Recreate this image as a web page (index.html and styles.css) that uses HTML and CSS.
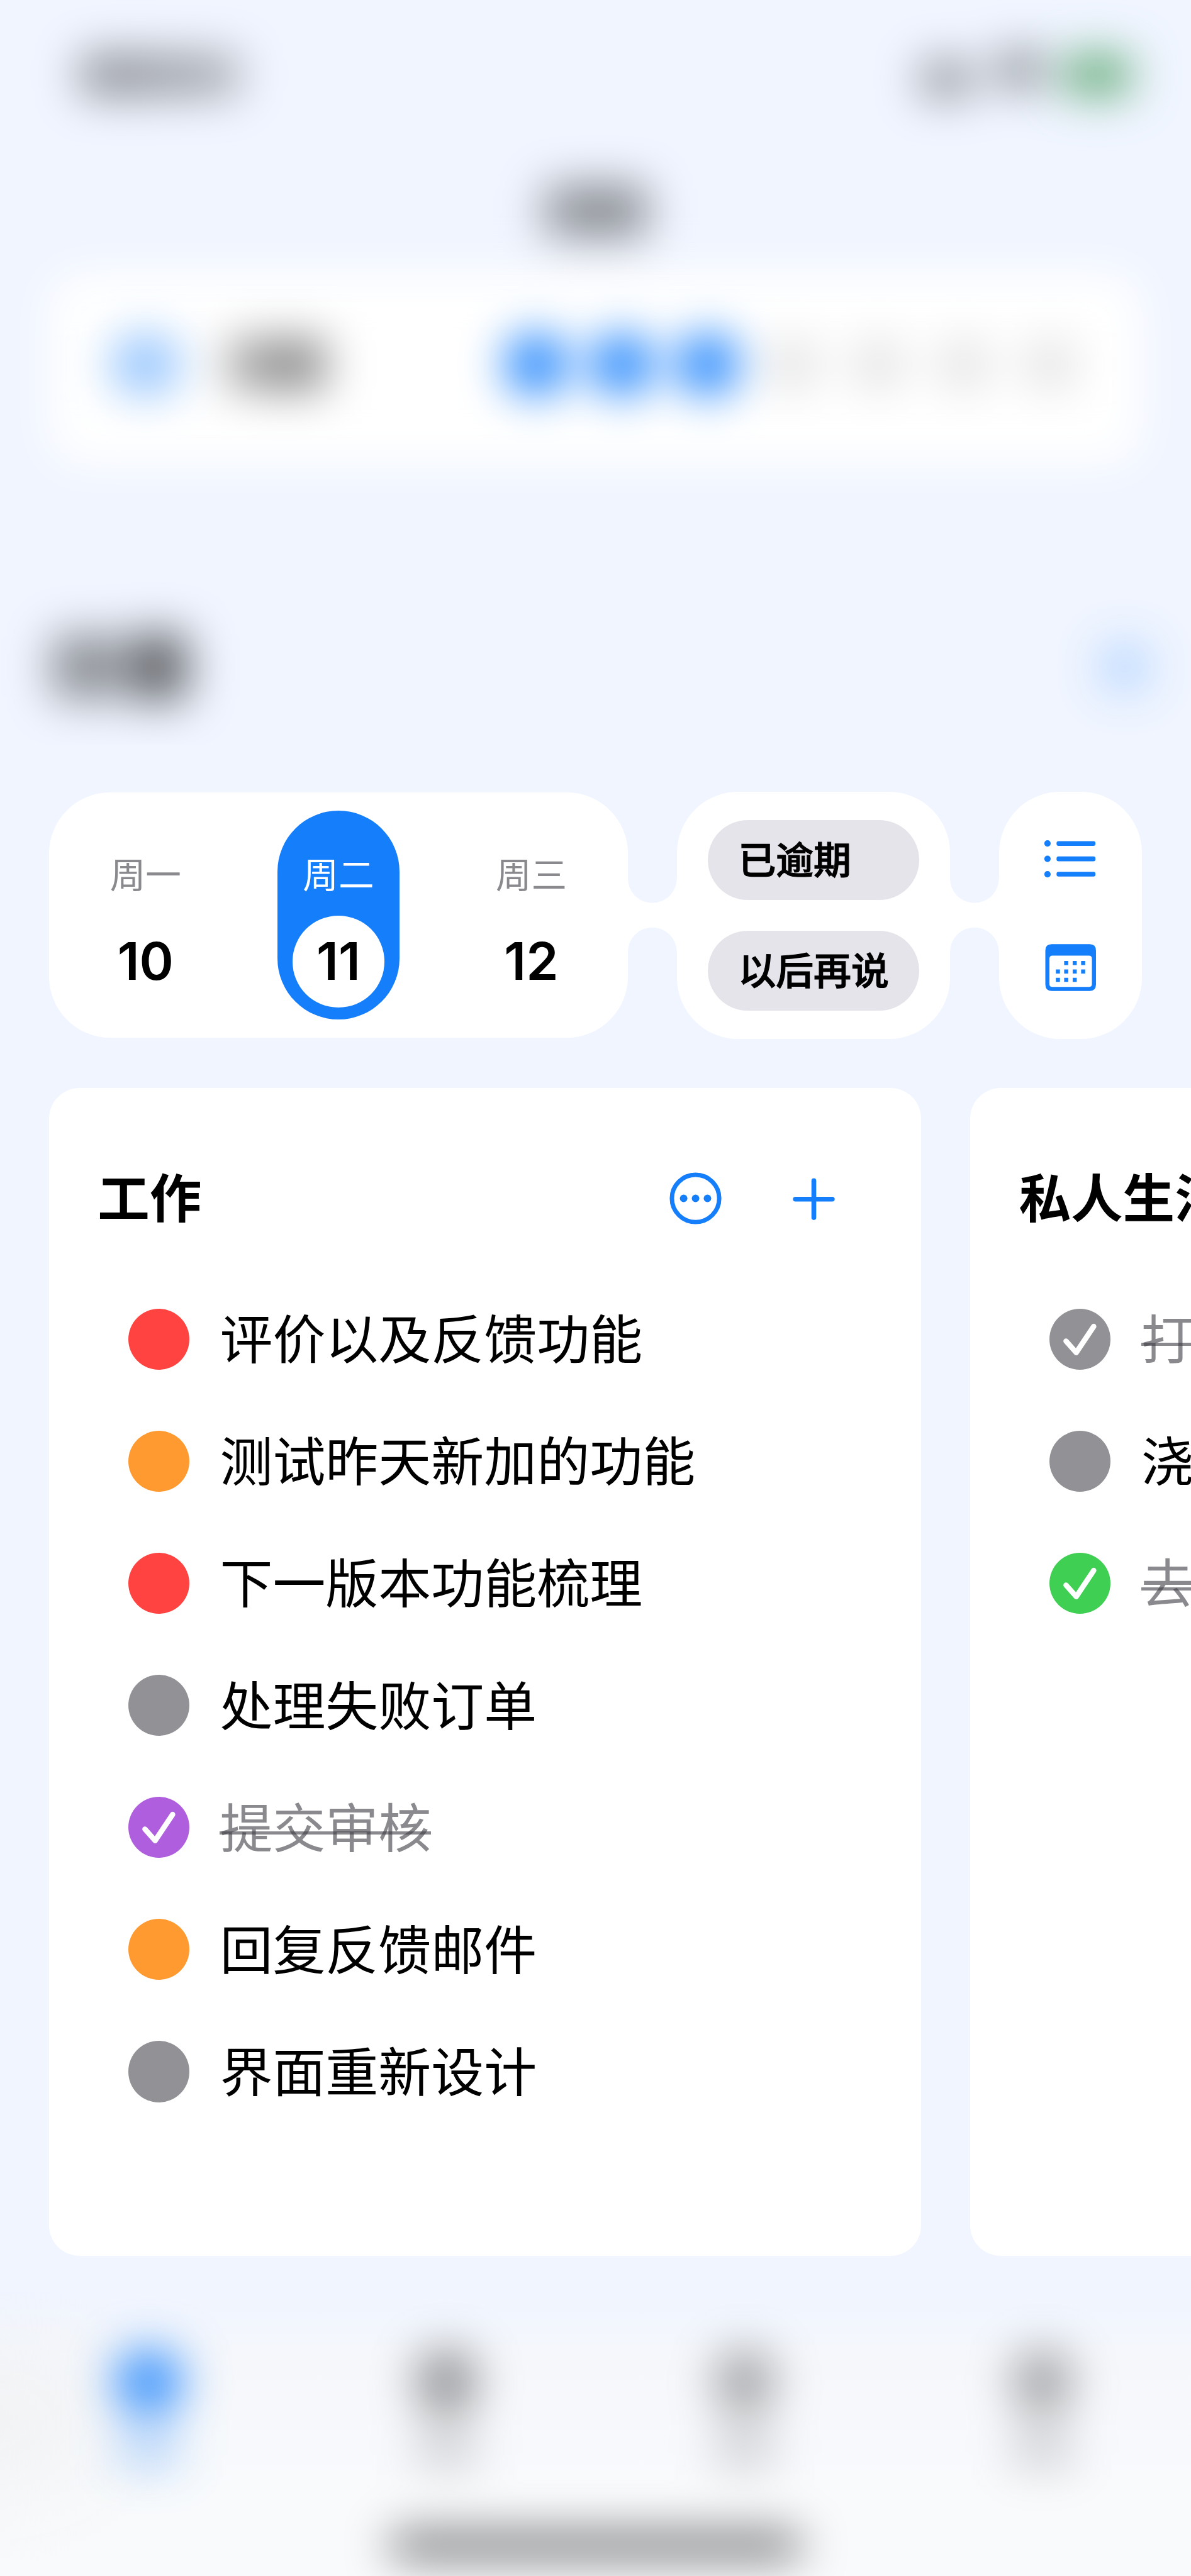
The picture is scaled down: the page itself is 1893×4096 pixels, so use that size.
FILE: index.html
```html
<!DOCTYPE html>
<html lang="zh-CN">
<head>
<meta charset="utf-8">
<title>任务</title>
<link rel="stylesheet" href="styles.css">
</head>
<body>
<header class="top">
  <div class="soft">
    <div class="status">
      <span class="blob clock"></span>
      <span class="blob signal"></span>
      <span class="blob wifi"></span>
      <span class="blob battery"></span>
    </div>
    <div class="nav"><span class="blob nav-title"></span></div>
    <div class="habit">
      <span class="blob habit-icon"></span>
      <span class="blob habit-name"></span>
      <div class="habit-days">
        <span class="day-dot on"></span><span class="day-dot on"></span><span class="day-dot on"></span>
        <span class="day-dot"></span><span class="day-dot"></span><span class="day-dot"></span><span class="day-dot"></span>
      </div>
    </div>
    <div class="section">
      <span class="blob heading-a"></span><span class="blob heading-b"></span>
      <span class="blob section-add"></span>
    </div>
  </div>
</header>

<main>
  <div class="filters">
    <div class="panel dates">
      <div class="date"><span class="weekday">周一</span><span class="num">10</span></div>
      <div class="date selected"><span class="weekday">周二</span><span class="num">11</span></div>
      <div class="date"><span class="weekday">周三</span><span class="num">12</span></div>
    </div>
    <svg class="link" viewBox="0 0 96 144"><path d="M-1 0H0A48 48 0 0 0 96 0H97V144H96A48 48 0 0 0 0 144H-1Z"/></svg>
    <div class="panel tags">
      <button class="tag">已逾期</button>
      <button class="tag">以后再说</button>
    </div>
    <svg class="link" viewBox="0 0 96 144"><path d="M-1 0H0A48 48 0 0 0 96 0H97V144H96A48 48 0 0 0 0 144H-1Z"/></svg>
    <div class="panel views">
      <svg class="view-icon" viewBox="0 0 120 120" fill="#157efb">
        <circle cx="14.7" cy="29.8" r="6.3"/><circle cx="14.7" cy="60" r="6.3"/><circle cx="14.7" cy="90.3" r="6.3"/>
        <rect x="32.5" y="25.2" width="76.5" height="9.4" rx="4"/><rect x="32.5" y="55.4" width="76.5" height="9.4" rx="4"/><rect x="32.5" y="85.6" width="76.5" height="9.4" rx="4"/>
      </svg>
      <svg class="view-icon" viewBox="0 0 120 120" fill="#157efb">
        <path fill-rule="evenodd" d="M23 14H97.500Q110 14 110 26.500V93Q110 106 97.500 106H23Q10.500 106 10.500 93V26.500Q10.500 14 23 14ZM24.500 36.500Q18.500 36.500 18.500 42.500V92Q18.500 98 24.500 98H96Q102 98 102 92V42.500Q102 36.500 96 36.500Z"/>
        <path d="M47.500 47h8v8h-8zM64.200 47h8v8h-8zM80.800 47h8v8h-8zM31.200 63.700h8v8h-8zM47.500 63.700h8v8h-8zM64.200 63.700h8v8h-8zM80.800 63.700h8v8h-8zM31.200 80h8v8h-8zM47.500 80h8v8h-8zM64.200 80h8v8h-8z"/>
      </svg>
    </div>
  </div>

  <div class="lists">
    <section class="list">
      <div class="list-head">
        <h2>工作</h2>
        <svg class="head-icon" viewBox="-60 -60 120 120">
          <circle r="46.500" fill="none" stroke="#157efb" stroke-width="8.600"/>
          <g fill="#157efb"><circle cx="-23.400" r="7.400"/><circle r="7.400"/><circle cx="23.400" r="7.400"/></g>
        </svg>
        <svg class="head-icon" viewBox="-60 -60 120 120">
          <path d="M-36.300 1.500H36.300M0-34.800V37.800" fill="none" stroke="#157efb" stroke-width="9.400" stroke-linecap="round"/>
        </svg>
      </div>
      <ul>
        <li><i class="dot red"></i><span class="task">评价以及反馈功能</span></li>
        <li><i class="dot orange"></i><span class="task">测试昨天新加的功能</span></li>
        <li><i class="dot red"></i><span class="task">下一版本功能梳理</span></li>
        <li><i class="dot gray"></i><span class="task">处理失败订单</span></li>
        <li><i class="dot purple"><svg viewBox="-60 -60 120 120"><path d="M-27.300 3.700-7.300 26.200 27-25.300"/></svg></i><span class="task done">提交审核</span></li>
        <li><i class="dot orange"></i><span class="task">回复反馈邮件</span></li>
        <li><i class="dot gray"></i><span class="task">界面重新设计</span></li>
      </ul>
    </section>
    <section class="list">
      <div class="list-head"><h2>私人生活</h2></div>
      <ul>
        <li><i class="dot gray"><svg viewBox="-60 -60 120 120"><path d="M-27.300 3.700-7.300 26.200 27-25.300"/></svg></i><span class="task done">打</span></li>
        <li><i class="dot gray"></i><span class="task">浇</span></li>
        <li><i class="dot green"><svg viewBox="-60 -60 120 120"><path d="M-27.300 3.700-7.300 26.200 27-25.300"/></svg></i><span class="task done">去</span></li>
      </ul>
    </section>
  </div>
</main>

<footer class="tabbar">
  <div class="soft">
    <div class="tabs">
      <div class="tab active"><span class="tab-icon"></span><span class="tab-label"></span></div>
      <div class="tab strong"><span class="tab-icon"></span><span class="tab-label"></span></div>
      <div class="tab"><span class="tab-icon"></span><span class="tab-label"></span></div>
      <div class="tab"><span class="tab-icon"></span><span class="tab-label"></span></div>
    </div>
    <div class="home"></div>
  </div>
</footer>
</body>
</html>
```
FILE: styles.css
```css
/* 1rem = 100 design units of a 2340-unit-wide screen */
html { font-size: 80.8974px; }
* { box-sizing: border-box; margin: 0; padding: 0; }
body {
  width: 23.4rem;
  height: 100vh;
  overflow: hidden;
  display: flex;
  flex-direction: column;
  background: #f0f5ff;
  color: #000;
  font-family: "Noto Sans CJK SC", sans-serif;
}
svg { display: block; flex: none; }

/* Blurred surroundings */
.soft { filter: blur(.45rem); }
.blob { flex: none; display: block; border-radius: .15rem; }
.top { height: 14.64rem; overflow: hidden; flex: none; }
.status { display: flex; height: 2.94rem; align-items: center; padding-left: 1.6rem; }
.clock { width: 3.1rem; height: .76rem; background: linear-gradient(90deg, rgba(0,0,0,.48), rgba(0,0,0,.32)); }
.signal { width: 1rem; height: .66rem; margin: .18rem 0 0 13.4rem; background: rgba(0,0,0,.44); }
.wifi { width: .86rem; height: .7rem; margin: -.2rem 0 0 .5rem; background: rgba(0,0,0,.48); }
.battery { width: 1.35rem; height: .75rem; margin-left: .42rem; background: #56a36b; border-radius: .25rem; }
.nav { height: 2.41rem; display: flex; align-items: center; justify-content: center; }
.nav-title { width: 1.98rem; height: .98rem; background: linear-gradient(90deg, rgba(0,0,0,.42), rgba(0,0,0,.48)); }
.habit {
  height: 3.78rem;
  margin: 0 .96rem;
  padding: 0 1.32rem .16rem 1.2rem;
  border-radius: .6rem;
  background: #fff;
  display: flex;
  align-items: center;
}
.habit-icon { width: 1.4rem; height: 1.2rem; border-radius: .6rem; background: rgba(21,126,251,.46); }
.habit-name { width: 1.92rem; height: 1rem; margin-left: .9rem; background: linear-gradient(90deg, rgba(0,0,0,.34), rgba(0,0,0,.52)); }
.habit-days { display: flex; gap: .68rem; margin-left: auto; align-items: center; }
.day-dot { width: 1rem; height: 1rem; border-radius: 50%; background: rgba(0,0,0,.12); }
.day-dot.on { width: 1.2rem; height: 1.2rem; margin: 0 -.1rem; background: #157efb; }
.section { height: 2.6rem; margin-top: 2.68rem; padding: 0 .85rem 0 1.04rem; display: flex; align-items: center; }
.heading-a { width: 1.3rem; height: 1.25rem; background: rgba(0,0,0,.43); }
.heading-b { width: 1.15rem; height: 1.3rem; margin-left: .18rem; background: rgba(0,0,0,.62); }
.section-add { width: .9rem; height: .9rem; margin-left: auto; border-radius: 50%; background: rgba(21,126,251,.32); }

/* Date, tag and view switches */
.filters { display: flex; align-items: center; height: 4.86rem; margin-top: .92rem; padding: 0 .96rem; }
.panel { background: #fff; border-radius: 1.2rem; flex: none; display: flex; }
.link { width: .96rem; height: 1.44rem; fill: #fff; overflow: visible; }
.dates { width: 11.38rem; height: 4.82rem; padding: 0 .7rem; align-items: center; gap: 1.39rem; }
.date { width: 2.4rem; height: 4.1rem; border-radius: 1.2rem; display: flex; flex-direction: column; align-items: center; gap: .39rem; padding-top: .73rem; }
.weekday { font-size: .7rem; line-height: .94rem; color: #8a8a8e; }
.num { width: 1.8rem; height: 1.8rem; border-radius: 50%; font: 600 1.02rem/1.8rem Inter, sans-serif; text-align: center; }
.selected { background: #157efb; }
.selected .weekday { color: #fff; }
.selected .num { background: #fff; }
.tags { width: 5.37rem; height: 4.86rem; flex-direction: column; align-items: center; justify-content: center; gap: .6rem; }
.tag {
  width: 4.16rem;
  height: 1.57rem;
  border: 0;
  border-radius: .785rem;
  background: #e5e4ea;
  color: #000;
  padding: 0 0 .07rem .6rem;
  font: 500 .74rem/1.5rem "Noto Sans CJK SC", sans-serif;
  -webkit-text-stroke: .015rem #000;
  text-align: left;
}
.views { width: 2.81rem; height: 4.86rem; padding-top: .715rem; flex-direction: column; align-items: center; gap: .945rem; }
.view-icon { width: 1.2rem; height: 1.2rem; }

/* Task lists */
.lists { display: flex; gap: .96rem; margin-top: .96rem; padding-left: .96rem; }
.list { flex: none; width: 17.14rem; height: 22.96rem; border-radius: .6rem; background: #fff; padding-top: 1.57rem; }
.list-head { display: flex; align-items: center; height: 1.2rem; padding: 0 1.51rem 0 .96rem; }
h2 { flex: 1; font-size: 1.02rem; line-height: 1.2rem; font-weight: 700; white-space: nowrap; padding-bottom: .12rem; }
.head-icon { width: 1.2rem; height: 1.2rem; margin-left: 1.12rem; }
ul { list-style: none; padding: .97rem 0 0 1.56rem; }
li { display: flex; align-items: center; height: 2.4rem; gap: .6rem; }
.dot { width: 1.2rem; height: 1.2rem; border-radius: 50%; flex: none; }
.dot path { fill: none; stroke: #fff; stroke-width: 10.5; stroke-linecap: round; stroke-linejoin: round; }
.red { background: #ff4340; }
.orange { background: #ff9a30; }
.gray { background: #929196; }
.purple { background: #af5edd; }
.green { background: #3ecf53; }
.task { font-size: 1.038rem; line-height: 1.4rem; padding-bottom: .11rem; white-space: nowrap; }
.done {
  color: rgba(60,60,67,.6);
  background: linear-gradient(rgba(60,60,67,.6), rgba(60,60,67,.6)) 0 .83rem / 100% .065rem no-repeat;
}

/* Tab bar */
.tabbar {
  flex: none;
  margin-top: .7rem;
  height: 5.6rem;
  overflow: hidden;
  background:
    radial-gradient(ellipse 3.6rem 2.8rem at 0 2.6rem, rgba(238,238,238,.5), rgba(240,240,240,0)),
    linear-gradient(#f0f5ff 0, #f5f7fb 1.3rem, #f8fafc 4rem);
}
.tabs { display: flex; padding-top: 1.16rem; }
.tab { flex: 1; display: flex; flex-direction: column; align-items: center; }
.tab-icon { width: 1.15rem; height: 1.25rem; border-radius: .5rem; background: rgba(0,0,0,.34); }
.tab-label { width: 1.15rem; height: .6rem; margin-top: .4rem; background: rgba(0,0,0,.2); }
.strong .tab-icon { background: rgba(0,0,0,.42); }
.active .tab-icon { width: 1.3rem; background: rgba(21,126,251,.84); }
.active .tab-label { background: rgba(21,126,251,.36); }
.home { width: 8.04rem; height: .3rem; margin: 1.43rem 0 0 7.68rem; border-radius: .15rem; background: #000; }
```
